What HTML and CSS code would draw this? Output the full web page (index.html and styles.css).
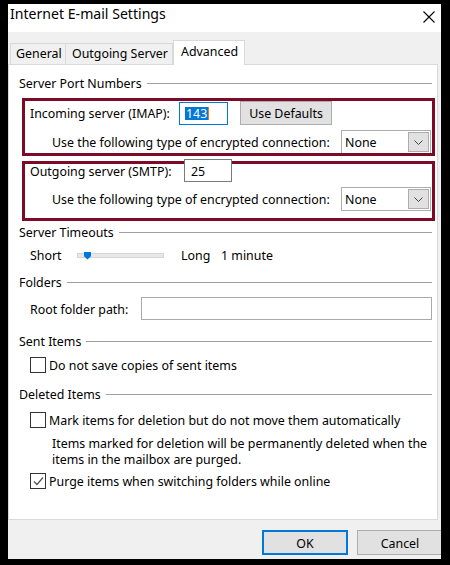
FILE: index.html
```html
<!DOCTYPE html>
<html>
<head>
<meta charset="utf-8">
<link rel="stylesheet" href="styles.css">
</head>
<body>
<div class="dialog">
  <div class="titlebar">
    <span class="title">Internet E-mail Settings</span>
    <svg class="close" width="12" height="12" viewBox="0 0 12 12"><path d="M0.5 0.5 L11.5 11.5 M11.5 0.5 L0.5 11.5" stroke="#000" stroke-width="1.1" fill="none"/></svg>
  </div>
  <div class="tabs">
    <div class="tab t-general">General</div>
    <div class="tab t-outgoing">Outgoing Server</div>
    <div class="tab t-advanced active">Advanced</div>
  </div>
  <div class="panel">
    <div class="group-head"><span>Server Port Numbers</span></div>
    <div class="mark box1">
      <div class="row r-top">
        <span class="lbl lbl-imap">Incoming server (IMAP):</span>
        <div class="input port focus"><span class="selected">143</span><span class="caret"></span></div>
        <div class="btn defaults">Use Defaults</div>
      </div>
      <div class="row r-enc">
        <span class="lbl lbl-enc">Use the following type of encrypted connection:</span>
        <div class="select"><span class="sel-text">None</span><span class="dd"><svg width="9" height="5" viewBox="0 0 9 5"><path d="M0.5 0.5 L4.5 4.5 L8.5 0.5" stroke="#444" stroke-width="1" fill="none"/></svg></span></div>
      </div>
    </div>
    <div class="mark box2">
      <div class="row r-top2">
        <span class="lbl lbl-smtp">Outgoing server (SMTP):</span>
        <div class="input port2">25</div>
      </div>
      <div class="row r-enc">
        <span class="lbl lbl-enc">Use the following type of encrypted connection:</span>
        <div class="select"><span class="sel-text">None</span><span class="dd"><svg width="9" height="5" viewBox="0 0 9 5"><path d="M0.5 0.5 L4.5 4.5 L8.5 0.5" stroke="#444" stroke-width="1" fill="none"/></svg></span></div>
      </div>
    </div>

    <div class="group-head gh-timeouts"><span>Server Timeouts</span></div>
    <div class="row slider-row">
      <span class="lbl lbl-short">Short</span>
      <div class="track"><span class="thumb"></span></div>
      <span class="lbl lbl-long">Long</span>
      <span class="lbl">1 minute</span>
    </div>

    <div class="group-head gh-folders"><span>Folders</span></div>
    <div class="row root-row">
      <span class="lbl lbl-root">Root folder path:</span>
      <div class="input root"></div>
    </div>

    <div class="group-head gh-sent"><span>Sent Items</span></div>
    <div class="row check-row cr-sent">
      <span class="check"></span>
      <span class="lbl">Do not save copies of sent items</span>
    </div>

    <div class="group-head gh-deleted"><span>Deleted Items</span></div>
    <div class="row check-row cr-mark">
      <span class="check"></span>
      <span class="lbl">Mark items for deletion but do not move them automatically</span>
    </div>
    <div class="note">Items marked for deletion will be permanently deleted when the<br>items in the mailbox are purged.</div>
    <div class="row check-row cr-purge">
      <span class="check checked"><svg width="13" height="13" viewBox="0 0 13 13"><path d="M2 6.5 L5 9.5 L11 2.5" stroke="#555" stroke-width="1.2" fill="none"/></svg></span>
      <span class="lbl">Purge items when switching folders while online</span>
    </div>
  </div>
  <div class="footer">
    <div class="btn ok">OK</div>
    <div class="btn cancel">Cancel</div>
  </div>
</div>
</body>
</html>
```

FILE: styles.css
```css
html, body {
  margin: 0;
  padding: 0;
  background: #000;
  width: 450px;
  height: 565px;
  overflow: hidden;
}

body {
  font-family: "Noto Sans", "Open Sans", sans-serif;
  font-size: 12.4px;
  color: #000;
}

.dialog {
  margin-top: 4px;
  margin-left: 8px;
  width: 433px;
  height: 555px;
  background: #f0f0f0;
  display: flex;
  flex-direction: column;
  overflow: hidden;
}

.titlebar {
  height: 28px;
  flex: none;
  background: #fff;
  display: flex;
  align-items: center;
  padding-left: 2px;
  padding-right: 6px;
}

.title {
  font-size: 14.1px;
  line-height: 18px;
  margin-top: -8px;
  flex: 1;
}

.close {
  margin-top: -3px;
}

.tabs {
  height: 32px;
  flex: none;
  display: flex;
  align-items: flex-end;
  padding-left: 2px;
}

.tab {
  height: 21px;
  box-sizing: border-box;
  border: 1px solid #d9d9d9;
  border-bottom: none;
  background: #f0f0f0;
  line-height: 20px;
  padding: 0 5px;
  white-space: nowrap;
  flex: none;
}

.t-general { width: 56px; }
.t-outgoing { width: 107px; border-left: none; padding-left: 6px; }

.tab.active {
  width: 72px;
  height: 25px;
  background: #fff;
  line-height: 22px;
  padding-left: 7px;
  margin-bottom: -1px;
  position: relative;
  z-index: 1;
}

.panel {
  height: 456px;
  flex: none;
  box-sizing: border-box;
  border: 1px solid #d9d9d9;
  width: 430px;
  background: #fff;
  padding: 10px 5px 0 10px;
}

.group-head {
  display: flex;
  align-items: center;
  height: 16px;
  white-space: nowrap;
}

.group-head span {
  line-height: 14px;
  padding-top: 2px;
}

.group-head::after {
  content: "";
  flex: 1;
  height: 1px;
  background: #a0a0a0;
  margin-left: 5px;
}

.row {
  display: flex;
  align-items: center;
  white-space: nowrap;
}

.lbl {
  line-height: 14px;
  padding-top: 2px;
  flex: none;
}

.mark {
  position: relative;
  margin-left: 3px;
  margin-right: -3px;
  box-sizing: border-box;
  padding-left: 8px;
}

.mark::after {
  content: "";
  position: absolute;
  left: 0;
  top: 0;
  right: 0;
  bottom: 0;
  border: 3px solid #7d0a26;
  pointer-events: none;
}

.box1 {
  margin-top: 7px;
  height: 58px;
  padding-top: 3px;
}

.box2 {
  margin-top: 5px;
  height: 60px;
  padding-top: 1px;
}

.r-top {
  height: 24px;
}

.lbl-imap { width: 149px; }
.lbl-smtp { width: 154px; }

.input {
  box-sizing: border-box;
  height: 23px;
  border: 1px solid #7a7a7a;
  background: #fff;
  flex: none;
  line-height: 21px;
}

.port {
  width: 49px;
  padding-left: 5px;
  display: flex;
  align-items: center;
}

.focus {
  border-color: #0078d7;
}

.selected {
  background: #0078d7;
  color: #fff;
  line-height: 13px;
  padding: 0 1px;
}

.caret {
  width: 1px;
  height: 13px;
  background: #e07b2b;
}

.btn {
  box-sizing: border-box;
  background: #e1e1e1;
  border: 1px solid #adadad;
  display: flex;
  align-items: center;
  justify-content: center;
  flex: none;
  padding-top: 1px;
}

.defaults {
  margin-left: 12px;
  width: 92px;
  height: 24px;
}

.r-enc {
  margin-top: 5px;
  height: 24px;
  padding-left: 22px;
}

.r-top2 {
  height: 23px;
  margin-top: -3px;
  position: relative;
  z-index: 1;
}

.port2 {
  width: 48px;
  padding-left: 6px;
  padding-top: 1px;
}

.lbl-enc { width: 289px; }

.select {
  box-sizing: border-box;
  width: 90px;
  height: 24px;
  border: 1px solid #adadad;
  background: #fff;
  display: flex;
  align-items: center;
  padding-left: 3px;
  padding-right: 1px;
  flex: none;
}

.sel-text {
  flex: 1;
  line-height: 16px;
  padding-top: 2px;
}

.dd {
  box-sizing: border-box;
  width: 21px;
  height: 20px;
  background: #e1e1e1;
  border: 1px solid #adadad;
  display: flex;
  align-items: center;
  justify-content: center;
}

.gh-timeouts { margin-top: 3px; }

.slider-row {
  margin-top: 7px;
  height: 16px;
  padding-left: 11px;
}

.lbl-short { width: 47px; }

.track {
  position: relative;
  box-sizing: border-box;
  width: 87px;
  height: 5px;
  background: #e7e7e7;
  border: 1px solid #d6d6d6;
  flex: none;
}

.thumb {
  position: absolute;
  left: 6px;
  top: -2px;
  width: 7px;
  height: 8px;
  background: #0078d7;
  clip-path: polygon(0 0, 100% 0, 100% 60%, 50% 100%, 0 60%);
}

.lbl-long {
  margin-left: 17px;
  width: 40px;
}

.gh-folders { margin-top: 11px; }

.root-row {
  margin-top: 7px;
  height: 23px;
  padding-left: 11px;
}

.lbl-root { width: 111px; }

.root {
  flex: 1;
  border-color: #a9a9a9;
}

.gh-sent { margin-top: 13px; }

.check-row {
  height: 16px;
  padding-left: 11px;
}

.cr-sent { margin-top: 8px; }

.check {
  box-sizing: border-box;
  width: 16px;
  height: 16px;
  border: 1px solid #333;
  background: #fff;
  margin-right: 3px;
  flex: none;
  display: flex;
  align-items: center;
  justify-content: center;
}

.gh-deleted { margin-top: 13px; }

.cr-mark { margin-top: 10px; }

.note {
  margin-top: 8px;
  padding-left: 33px;
  line-height: 16px;
  white-space: nowrap;
}

.cr-purge { margin-top: 5px; }

.footer {
  flex: 1;
  display: flex;
  align-items: flex-start;
  padding-top: 10px;
  padding-left: 254px;
}

.ok {
  width: 86px;
  height: 25px;
  border: 2px solid #0078d7;
}

.cancel {
  width: 86px;
  height: 25px;
  margin-left: 9px;
}
```
